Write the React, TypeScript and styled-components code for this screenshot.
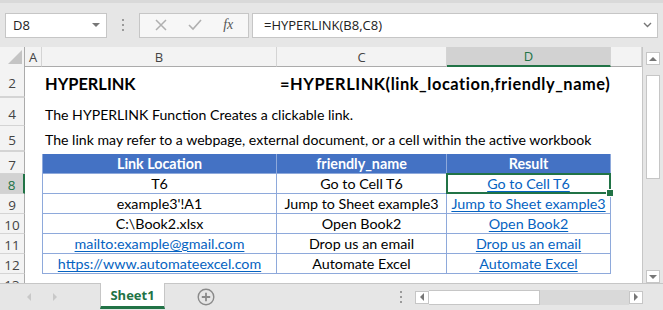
import styled, { createGlobalStyle } from 'styled-components'

const GlobalStyle = createGlobalStyle`
html, body {
margin: 0;
padding: 0;
background: #e6e6e6;
}
* {
box-sizing: border-box;
}
`

const GREEN = '#217346'
const COLS = '25px 17px 235px 170px 164px 1fr'

const Window = styled.div`
width: 663px;
height: 310px;
display: flex;
flex-direction: column;
overflow: hidden;
background: #e6e6e6;
font-family: "Open Sans", "Noto Sans", sans-serif;
`
const FormulaBar = styled.div`
height: 47px;
display: flex;
align-items: center;
padding: 0 5px 0 5px;
border-top: 3px solid #d9d9d9;
`
const NameBox = styled.div`
width: 102px;
height: 25px;
background: #fff;
border: 1px solid #c6c6c6;
display: flex;
align-items: center;
justify-content: space-between;
padding: 0 6px 0 7px;
font-size: 13px;
color: #222;
`
const Caret = styled.span`
width: 0;
height: 0;
border-left: 4px solid transparent;
border-right: 4px solid transparent;
border-top: 4px solid #777;
`
const Grip = styled.div`
width: 32px;
display: flex;
flex-direction: column;
align-items: center;
gap: 3px;
& > span {
width: 2px;
height: 2px;
background: #9a9a9a;
}
`
const FxBox = styled.div`
width: 110px;
height: 25px;
background: #f7f7f7;
border: 1px solid #c6c6c6;
display: flex;
align-items: center;
justify-content: space-around;
padding: 0 4px;
`
const FxLabel = styled.span`
font-family: "Liberation Serif", serif;
font-style: italic;
font-size: 14px;
color: #555;
`
const FormulaInput = styled.div`
flex: 1;
height: 25px;
margin-left: 3px;
background: #fff;
border: 1px solid #c6c6c6;
display: flex;
align-items: center;
justify-content: space-between;
padding: 0 5px 0 11px;
font-size: 13px;
color: #222;
`
const Body = styled.div`
flex: 1;
display: flex;
min-height: 0;
`
const Sheet = styled.div`
flex: 1;
background: #fff;
border-right: 1px solid #c6c6c6;
overflow: hidden;
`
const Row = styled.div<{ $h: number }>`
display: grid;
grid-template-columns: ${COLS};
height: ${p => p.$h}px;
`
const ColHead = styled.div<{ $sel?: boolean }>`
display: flex;
align-items: center;
justify-content: center;
background: ${p => (p.$sel ? '#d2d2d2' : '#f3f3f3')};
color: ${p => (p.$sel ? GREEN : '#444')};
border-right: 1px solid #d4d4d4;
border-bottom: ${p => (p.$sel ? `2px solid ${GREEN}` : '1px solid #ababab')};
font-size: 13px;
`
const Corner = styled.div`
background: #f3f3f3;
border-right: 1px solid #ababab;
border-bottom: 1px solid #ababab;
display: flex;
align-items: flex-end;
justify-content: flex-end;
padding: 0 2px 2px 0;
&::before {
content: '';
width: 0;
height: 0;
border-left: 14px solid transparent;
border-bottom: 14px solid #c4c4c4;
}
`
const RowHead = styled.div<{ $sel?: boolean; $hidden?: boolean }>`
display: flex;
align-items: center;
justify-content: center;
background: ${p => (p.$sel ? '#d2d2d2' : '#f3f3f3')};
color: ${p => (p.$sel ? GREEN : '#444')};
border-right: ${p => (p.$sel ? `2px solid ${GREEN}` : '1px solid #ababab')};
border-bottom: 1px solid #d4d4d4;
border-top: ${p => (p.$hidden ? '1px solid #d4d4d4' : 'none')};
font-size: 13.5px;
padding-top: 3px;
overflow: hidden;
`
const Cell = styled.div<{ $align?: string }>`
display: flex;
align-items: flex-end;
justify-content: ${p => p.$align || 'flex-start'};
padding: 0 3px 3px 3px;
font-family: Lato, "Open Sans", sans-serif;
font-size: 14.1px;
color: #000;
white-space: nowrap;
`
const Title = styled(Cell)<{ $wide?: boolean }>`
font-size: 16.4px;
font-weight: 700;
padding-bottom: 4px;
letter-spacing: ${p => (p.$wide ? '0.55px' : '0')};
overflow: visible;
`
const TCell = styled.div<{ $head?: boolean; $link?: boolean; $first?: boolean }>`
display: flex;
align-items: center;
justify-content: center;
font-family: Lato, "Open Sans", sans-serif;
font-size: 14.3px;
white-space: nowrap;
background: ${p => (p.$head ? '#4472c4' : '#fff')};
color: ${p => (p.$head ? '#fff' : p.$link ? '#0563c1' : '#000')};
font-weight: ${p => (p.$head ? 700 : 400)};
text-decoration: ${p => (p.$link ? 'underline' : 'none')};
text-underline-offset: 2px;
border-bottom: 1px solid #8ea9db;
border-right: 1px solid #8ea9db;
border-left: ${p => (p.$first ? '1px solid #8ea9db' : 'none')};
`
const Selected = styled(TCell)`
position: relative;
&::after {
content: '';
position: absolute;
left: -1px;
top: -1px;
right: -1px;
bottom: -1px;
border: 2px solid ${GREEN};
}
&::before {
content: '';
position: absolute;
right: -4px;
bottom: -4px;
width: 6px;
height: 6px;
background: ${GREEN};
border: 1px solid #fff;
z-index: 1;
}
`
const VScroll = styled.div`
width: 20px;
display: flex;
flex-direction: column;
align-items: center;
padding: 5px 0 0 0;
background: #e6e6e6;
`
const ScrollBtn = styled.div<{ $dir: 'up' | 'down' | 'left' | 'right' }>`
width: 14px;
height: 13px;
background: #fff;
border: 1px solid #c6c6c6;
display: flex;
align-items: center;
justify-content: center;
&::before {
content: '';
width: 0;
height: 0;
${p =>
  p.$dir === 'up'
    ? 'border-left: 4px solid transparent; border-right: 4px solid transparent; border-bottom: 4px solid #777;'
    : p.$dir === 'down'
    ? 'border-left: 4px solid transparent; border-right: 4px solid transparent; border-top: 4px solid #777;'
    : p.$dir === 'left'
    ? 'border-top: 4px solid transparent; border-bottom: 4px solid transparent; border-right: 4px solid #777;'
    : 'border-top: 4px solid transparent; border-bottom: 4px solid transparent; border-left: 4px solid #777;'}
}
`
const VThumb = styled.div`
width: 14px;
height: 104px;
margin-top: 10px;
background: #fff;
border: 1px solid #c6c6c6;
`
const VTrack = styled.div`
flex: 1;
`
const TabBar = styled.div`
height: 27px;
display: flex;
align-items: stretch;
border-top: 1px solid #c6c6c6;
background: #e6e6e6;
`
const NavArrows = styled.div`
width: 100px;
display: flex;
align-items: center;
padding-left: 27px;
gap: 22px;
& > span {
width: 0;
height: 0;
border-top: 4px solid transparent;
border-bottom: 4px solid transparent;
}
& > span:first-child {
border-right: 4px solid #c8c8c8;
}
& > span:last-child {
border-left: 4px solid #c8c8c8;
}
`
const SheetTab = styled.div`
width: 65px;
margin-top: -1px;
background: #fff;
border-left: 1px solid #c6c6c6;
border-right: 1px solid #c6c6c6;
border-bottom: 3px solid ${GREEN};
display: flex;
align-items: center;
justify-content: center;
color: ${GREEN};
font-family: "Open Sans", sans-serif;
font-weight: 700;
font-size: 13px;
margin-bottom: 1px;
`
const AddSheet = styled.div`
margin-left: 32px;
display: flex;
align-items: center;
`
const TabGrip = styled(Grip)`
width: auto;
margin-left: auto;
margin-right: 13px;
justify-content: center;
`
const HScroll = styled.div`
width: 228px;
display: flex;
align-items: center;
margin-right: 20px;
`
const HThumb = styled.div`
width: 111px;
height: 15px;
background: #fff;
border: 1px solid #c6c6c6;
border-left: none;
`
const HTrack = styled.div`
flex: 1;
height: 15px;
background: #d9d9d9;
`

type Link = { loc: string; locLink?: boolean; name: string; result: string }

const links: Link[] = [
  { loc: 'T6', name: 'Go to Cell T6', result: 'Go to Cell T6' },
  { loc: "example3'!A1", name: 'Jump to Sheet example3', result: 'Jump to Sheet example3' },
  { loc: 'C:\\Book2.xlsx', name: 'Open Book2', result: 'Open Book2' },
  { loc: 'mailto:example@gmail.com', locLink: true, name: 'Drop us an email', result: 'Drop us an email' },
  { loc: 'https://www.automateexcel.com', locLink: true, name: 'Automate Excel', result: 'Automate Excel' },
]

const Dots = () => (
  <>
    <span />
    <span />
    <span />
  </>
)

export default function App() {
  return (
    <Window>
      <GlobalStyle />
      <FormulaBar>
        <NameBox>
          D8
          <Caret />
        </NameBox>
        <Grip>
          <Dots />
        </Grip>
        <FxBox>
          <svg width="12" height="12" viewBox="0 0 12 12">
            <path d="M1 1 L11 11 M11 1 L1 11" stroke="#b0b0b0" strokeWidth="1.5" />
          </svg>
          <svg width="14" height="12" viewBox="0 0 14 12">
            <path d="M1 6 L5 10 L13 1" stroke="#b0b0b0" strokeWidth="1.6" fill="none" />
          </svg>
          <FxLabel>fx</FxLabel>
        </FxBox>
        <FormulaInput>
          =HYPERLINK(B8,C8)
          <svg width="9" height="6" viewBox="0 0 9 6">
            <path d="M1 1 L4.5 4.5 L8 1" stroke="#777" strokeWidth="1.4" fill="none" />
          </svg>
        </FormulaInput>
      </FormulaBar>
      <Body>
        <Sheet>
          <Row $h={19}>
            <Corner />
            <ColHead>A</ColHead>
            <ColHead>B</ColHead>
            <ColHead>C</ColHead>
            <ColHead $sel>D</ColHead>
            <ColHead />
          </Row>
          <Row $h={31}>
            <RowHead>2</RowHead>
            <Cell />
            <Title>HYPERLINK</Title>
            <Title $wide style={{ gridColumn: 'span 2' }}>=HYPERLINK(link_location,friendly_name)</Title>
          </Row>
          <Row $h={2}>
            <RowHead $hidden />
          </Row>
          <Row $h={27}>
            <RowHead>4</RowHead>
            <Cell />
            <Cell>The HYPERLINK Function Creates a clickable link.</Cell>
          </Row>
          <Row $h={25}>
            <RowHead>5</RowHead>
            <Cell />
            <Cell>The link may refer to a webpage, external document, or a cell within the active workbook</Cell>
          </Row>
          <Row $h={3}>
            <RowHead $hidden />
          </Row>
          <Row $h={20}>
            <RowHead>7</RowHead>
            <Cell />
            <TCell $head $first>Link Location</TCell>
            <TCell $head>friendly_name</TCell>
            <TCell $head>Result</TCell>
          </Row>
          {links.map((l, i) => (
            <Row $h={20} key={l.loc}>
              <RowHead $sel={i === 0}>{i + 8}</RowHead>
              <Cell />
              <TCell $first $link={l.locLink}>{l.loc}</TCell>
              <TCell>{l.name}</TCell>
              {i === 0 ? <Selected $link>{l.result}</Selected> : <TCell $link>{l.result}</TCell>}
            </Row>
          ))}
          <Row $h={20}>
            <RowHead>13</RowHead>
          </Row>
        </Sheet>
        <VScroll>
          <ScrollBtn $dir="up" />
          <VThumb />
          <VTrack />
          <ScrollBtn $dir="down" />
        </VScroll>
      </Body>
      <TabBar>
        <NavArrows>
          <span />
          <span />
        </NavArrows>
        <SheetTab>Sheet1</SheetTab>
        <AddSheet>
          <svg width="18" height="18" viewBox="0 0 18 18">
            <circle cx="9" cy="9" r="7.8" stroke="#8a8a8a" strokeWidth="1.4" fill="none" />
            <path d="M9 4.8 V13.2 M4.8 9 H13.2" stroke="#8a8a8a" strokeWidth="1.8" />
          </svg>
        </AddSheet>
        <TabGrip>
          <Dots />
        </TabGrip>
        <HScroll>
          <ScrollBtn $dir="left" />
          <HThumb />
          <HTrack />
          <ScrollBtn $dir="right" />
        </HScroll>
      </TabBar>
    </Window>
  )
}
